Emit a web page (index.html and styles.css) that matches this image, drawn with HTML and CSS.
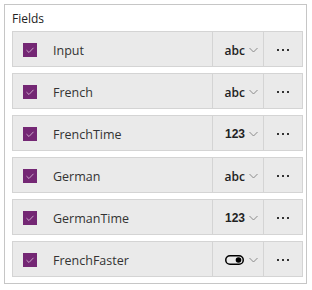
FILE: index.html
```html
<!DOCTYPE html>
<html lang="en">
<head>
    <meta charset="UTF-8">
    <title>Fields</title>
    <link rel="stylesheet" href="styles.css">
</head>
<body>
    <div id="fields">
        <div class="title">Fields</div>
        <div class="list">
            <div class="field">
                <div class="main"><span class="check"><svg width="14" height="14" viewBox="0 0 14 14"><path d="M3.5 7.2 L6 9.5 L10.5 4.8" fill="none" stroke="#c9a6c9" stroke-width="1"/></svg></span><span class="name">Input</span></div>
                <div class="type"><span class="kind">abc</span><svg class="chev" width="9" height="6" viewBox="0 0 9 6"><path d="M0.5 1 L4.5 5 L8.5 1" fill="none" stroke="#8a8a8a" stroke-width="1"/></svg></div>
                <div class="more"><i></i><i></i><i></i></div>
            </div>
            <div class="field">
                <div class="main"><span class="check"><svg width="14" height="14" viewBox="0 0 14 14"><path d="M3.5 7.2 L6 9.5 L10.5 4.8" fill="none" stroke="#c9a6c9" stroke-width="1"/></svg></span><span class="name">French</span></div>
                <div class="type"><span class="kind">abc</span><svg class="chev" width="9" height="6" viewBox="0 0 9 6"><path d="M0.5 1 L4.5 5 L8.5 1" fill="none" stroke="#8a8a8a" stroke-width="1"/></svg></div>
                <div class="more"><i></i><i></i><i></i></div>
            </div>
            <div class="field">
                <div class="main"><span class="check"><svg width="14" height="14" viewBox="0 0 14 14"><path d="M3.5 7.2 L6 9.5 L10.5 4.8" fill="none" stroke="#c9a6c9" stroke-width="1"/></svg></span><span class="name">FrenchTime</span></div>
                <div class="type"><span class="kind num">123</span><svg class="chev" width="9" height="6" viewBox="0 0 9 6"><path d="M0.5 1 L4.5 5 L8.5 1" fill="none" stroke="#8a8a8a" stroke-width="1"/></svg></div>
                <div class="more"><i></i><i></i><i></i></div>
            </div>
            <div class="field">
                <div class="main"><span class="check"><svg width="14" height="14" viewBox="0 0 14 14"><path d="M3.5 7.2 L6 9.5 L10.5 4.8" fill="none" stroke="#c9a6c9" stroke-width="1"/></svg></span><span class="name">German</span></div>
                <div class="type"><span class="kind">abc</span><svg class="chev" width="9" height="6" viewBox="0 0 9 6"><path d="M0.5 1 L4.5 5 L8.5 1" fill="none" stroke="#8a8a8a" stroke-width="1"/></svg></div>
                <div class="more"><i></i><i></i><i></i></div>
            </div>
            <div class="field">
                <div class="main"><span class="check"><svg width="14" height="14" viewBox="0 0 14 14"><path d="M3.5 7.2 L6 9.5 L10.5 4.8" fill="none" stroke="#c9a6c9" stroke-width="1"/></svg></span><span class="name">GermanTime</span></div>
                <div class="type"><span class="kind num">123</span><svg class="chev" width="9" height="6" viewBox="0 0 9 6"><path d="M0.5 1 L4.5 5 L8.5 1" fill="none" stroke="#8a8a8a" stroke-width="1"/></svg></div>
                <div class="more"><i></i><i></i><i></i></div>
            </div>
            <div class="field">
                <div class="main"><span class="check"><svg width="14" height="14" viewBox="0 0 14 14"><path d="M3.5 7.2 L6 9.5 L10.5 4.8" fill="none" stroke="#c9a6c9" stroke-width="1"/></svg></span><span class="name">FrenchFaster</span></div>
                <div class="type"><svg class="toggle" width="19" height="10" viewBox="0 0 19 10"><rect x="0.75" y="0.75" width="17.5" height="8.5" rx="4.25" fill="none" stroke="#000" stroke-width="1.5"/><circle cx="13.5" cy="5" r="2.8" fill="#000"/></svg><svg class="chev" width="9" height="6" viewBox="0 0 9 6"><path d="M0.5 1 L4.5 5 L8.5 1" fill="none" stroke="#8a8a8a" stroke-width="1"/></svg></div>
                <div class="more"><i></i><i></i><i></i></div>
            </div>
        </div>
    </div>
</body>
</html>
```

FILE: styles.css
```css
body {
    margin: 0;
    background-color: #fff;
    font-family: "Open Sans", "Noto Sans", Arial, sans-serif;
    color: #333;
}

#fields {
    margin: 4px 0 0 4px;
    width: 301px;
    height: 278px;
    border: 1px solid #c6c6c6;
}

.title {
    height: 26px;
    padding-left: 7px;
    font-size: 12px;
    line-height: 26px;
    color: #222;
    box-sizing: border-box;
    padding-top: 1px;
}

.list {
    display: flex;
    flex-direction: column;
    gap: 6px;
    padding: 0 3px 0 7px;
}

.field {
    display: flex;
    height: 34px;
    background-color: #eaeaea;
    border: 1px solid #d4d4d4;
}

.main {
    flex: 1;
    display: flex;
    align-items: center;
    padding: 2px 0 0 10px;
}

.check {
    width: 14px;
    height: 14px;
    background-color: #742774;
    display: flex;
}

.name {
    margin-left: 16px;
    font-size: 12.5px;
    color: #333;
}

.type {
    border-left: 1px solid #d4d4d4;
    display: flex;
    align-items: center;
    justify-content: flex-end;
    padding: 2px 5px 0 0;
    width: 45px;
}

.kind {
    font-size: 12px;
    font-weight: 600;
    color: #222;
    margin-right: 4px;
}

.kind.num {
    font-family: "Liberation Sans", Arial, sans-serif;
    font-weight: bold;
}

.toggle {
    margin-right: 5px;
}

.chev {
    display: block;
}

.more {
    width: 38px;
    border-left: 1px solid #d4d4d4;
    display: flex;
    align-items: center;
    justify-content: center;
    gap: 3px;
    padding-top: 2px;
}

.more i {
    width: 2px;
    height: 2px;
    background-color: #333;
}
```
